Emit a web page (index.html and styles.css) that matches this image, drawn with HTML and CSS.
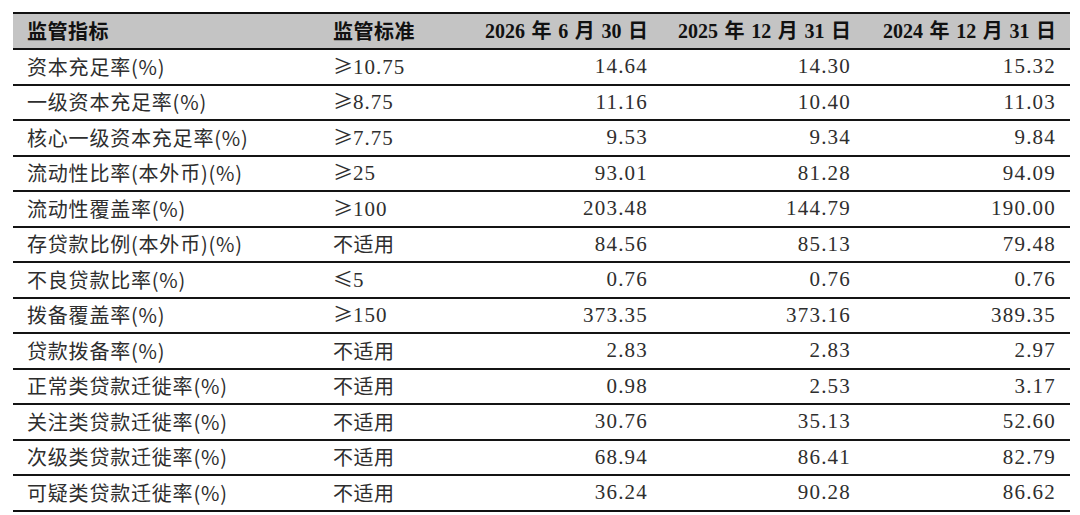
FILE: index.html
```html
<!DOCTYPE html>
<html lang="zh-CN">
<head>
<meta charset="utf-8">
<title>监管指标</title>
<link rel="stylesheet" href="styles.css">
</head>
<body>
<div class="page">
  <div class="table">
    <div class="row head">
      <div class="cell name">监管指标</div>
      <div class="cell std">监管标准</div>
      <div class="cell num">2026 年 6 月 30 日</div>
      <div class="cell num">2025 年 12 月 31 日</div>
      <div class="cell num">2024 年 12 月 31 日</div>
    </div>
    <div class="row"><div class="cell name">资本充足率(%)</div><div class="cell std"><span class="sym">≥</span>10.75</div><div class="cell num">14.64</div><div class="cell num">14.30</div><div class="cell num">15.32</div></div>
    <div class="row"><div class="cell name">一级资本充足率(%)</div><div class="cell std"><span class="sym">≥</span>8.75</div><div class="cell num">11.16</div><div class="cell num">10.40</div><div class="cell num">11.03</div></div>
    <div class="row"><div class="cell name">核心一级资本充足率(%)</div><div class="cell std"><span class="sym">≥</span>7.75</div><div class="cell num">9.53</div><div class="cell num">9.34</div><div class="cell num">9.84</div></div>
    <div class="row"><div class="cell name">流动性比率(本外币)(%)</div><div class="cell std"><span class="sym">≥</span>25</div><div class="cell num">93.01</div><div class="cell num">81.28</div><div class="cell num">94.09</div></div>
    <div class="row"><div class="cell name">流动性覆盖率(%)</div><div class="cell std"><span class="sym">≥</span>100</div><div class="cell num">203.48</div><div class="cell num">144.79</div><div class="cell num">190.00</div></div>
    <div class="row"><div class="cell name">存贷款比例(本外币)(%)</div><div class="cell std cjk">不适用</div><div class="cell num">84.56</div><div class="cell num">85.13</div><div class="cell num">79.48</div></div>
    <div class="row"><div class="cell name">不良贷款比率(%)</div><div class="cell std"><span class="sym">≤</span>5</div><div class="cell num">0.76</div><div class="cell num">0.76</div><div class="cell num">0.76</div></div>
    <div class="row"><div class="cell name">拨备覆盖率(%)</div><div class="cell std"><span class="sym">≥</span>150</div><div class="cell num">373.35</div><div class="cell num">373.16</div><div class="cell num">389.35</div></div>
    <div class="row"><div class="cell name">贷款拨备率(%)</div><div class="cell std cjk">不适用</div><div class="cell num">2.83</div><div class="cell num">2.83</div><div class="cell num">2.97</div></div>
    <div class="row"><div class="cell name">正常类贷款迁徙率(%)</div><div class="cell std cjk">不适用</div><div class="cell num">0.98</div><div class="cell num">2.53</div><div class="cell num">3.17</div></div>
    <div class="row"><div class="cell name">关注类贷款迁徙率(%)</div><div class="cell std cjk">不适用</div><div class="cell num">30.76</div><div class="cell num">35.13</div><div class="cell num">52.60</div></div>
    <div class="row"><div class="cell name">次级类贷款迁徙率(%)</div><div class="cell std cjk">不适用</div><div class="cell num">68.94</div><div class="cell num">86.41</div><div class="cell num">82.79</div></div>
    <div class="row"><div class="cell name">可疑类贷款迁徙率(%)</div><div class="cell std cjk">不适用</div><div class="cell num">36.24</div><div class="cell num">90.28</div><div class="cell num">86.62</div></div>
  </div>
</div>
</body>
</html>
```
FILE: styles.css
```css
html, body {
  margin: 0;
  padding: 0;
  background: #ffffff;
}

.page {
  padding: 12px 10px 0 13px;
}

.table {
  width: 1057px;
  border-top: 2px solid #111111;
  border-bottom: 2px solid #111111;
  color: #2e2e2e;
}

.row {
  display: grid;
  grid-template-columns: 306px 150px 193px 203px 205px;
  height: 33.5px;
  align-items: center;
  border-top: 2px solid #141414;
}

.row.head {
  height: 34px;
  border-top: none;
  background: #c4c4c4;
  color: #111111;
}

.row.head + .row {
  border-top: 2px solid #111111;
}

.cell {
  white-space: nowrap;
  font-size: 20px;
  line-height: 1;
}

.name {
  padding-left: 14px;
  font-family: "Noto Sans CJK SC", sans-serif;
  letter-spacing: 0.8px;
}

.std {
  padding-left: 14px;
  font-family: "Liberation Serif", serif;
  font-size: 21px;
  letter-spacing: 1px;
}

.sym {
  font-family: "Noto Sans CJK SC", sans-serif;
  font-size: 20px;
  letter-spacing: 0;
}

.std.cjk {
  font-family: "Noto Sans CJK SC", sans-serif;
  font-size: 20px;
  letter-spacing: 0.5px;
}

.num {
  text-align: right;
  padding-right: 14px;
  font-family: "Liberation Serif", serif;
  font-size: 21px;
  letter-spacing: 1.2px;
}

.row.head .cell {
  font-family: "Liberation Serif", "Noto Sans CJK SC", serif;
  font-size: 20px;
  font-weight: 700;
  letter-spacing: 0;
  word-spacing: 1.6px;
}

.row.head .name,
.row.head .std {
  font-family: "Noto Sans CJK SC", sans-serif;
  font-size: 20px;
  font-weight: 700;
  letter-spacing: 0.5px;
}
```
